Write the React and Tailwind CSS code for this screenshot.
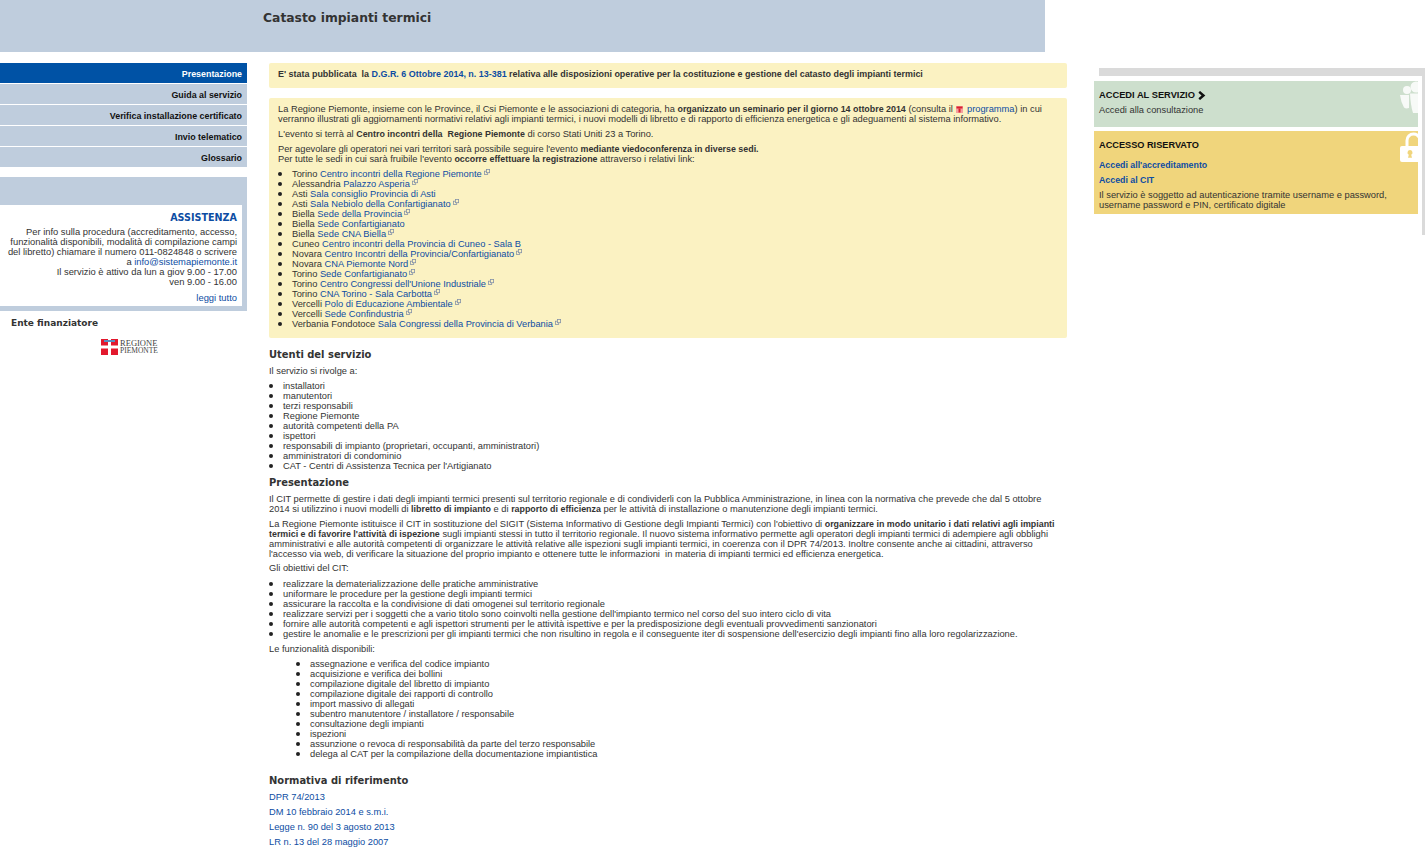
const Ext = () => (
  <svg width="6" height="6" viewBox="0 0 6 6" className="inline-block ml-[2px] align-[2px]" fill="none" stroke="#8593a8" strokeWidth="0.8">
    <rect x="0.5" y="2.2" width="3.2" height="3.2" />
    <rect x="2.4" y="0.5" width="3.2" height="3.2" fill="#fbf2c2" />
  </svg>
);
const A = ({ children, ext }) => (
  <>
    <a className="text-[#0d4da3]">{children}</a>
    {ext && <Ext />}
  </>
);
const B = ({ children }) => <b className="text-[8.9px]">{children}</b>;
const seats = [
  ["Torino", "Centro incontri della Regione Piemonte", true],
  ["Alessandria", "Palazzo Asperia", true],
  ["Asti", "Sala consiglio Provincia di Asti", false],
  ["Asti", "Sala Nebiolo della Confartigianato", true],
  ["Biella", "Sede della Provincia", true],
  ["Biella", "Sede Confartigianato", false],
  ["Biella", "Sede CNA Biella", true],
  ["Cuneo", "Centro incontri della Provincia di Cuneo - Sala B", false],
  ["Novara", "Centro Incontri della Provincia/Confartigianato", true],
  ["Novara", "CNA Piemonte Nord", true],
  ["Torino", "Sede Confartigianato", true],
  ["Torino", "Centro Congressi dell'Unione Industriale", true],
  ["Torino", "CNA Torino - Sala Carbotta", true],
  ["Vercelli", "Polo di Educazione Ambientale", true],
  ["Vercelli", "Sede Confindustria", true],
  ["Verbania Fondotoce", "Sala Congressi della Provincia di Verbania", true],
];
const users = [
  "installatori", "manutentori", "terzi responsabili", "Regione Piemonte", "autorità competenti della PA", "ispettori",
  "responsabili di impianto (proprietari, occupanti, amministratori)", "amministratori di condominio", "CAT - Centri di Assistenza Tecnica per l'Artigianato",
];
const goals = [
  "realizzare la dematerializzazione delle pratiche amministrative",
  "uniformare le procedure per la gestione degli impianti termici",
  "assicurare la raccolta e la condivisione di dati omogenei sul territorio regionale",
  "realizzare servizi per i soggetti che a vario titolo sono coinvolti nella gestione dell'impianto termico nel corso del suo intero ciclo di vita",
  "fornire alle autorità competenti e agli ispettori strumenti per le attività ispettive e per la predisposizione degli eventuali provvedimenti sanzionatori",
  "gestire le anomalie e le prescrizioni per gli impianti termici che non risultino in regola e il conseguente iter di sospensione dell'esercizio degli impianti fino alla loro regolarizzazione.",
];
const funcs = [
  "assegnazione e verifica del codice impianto", "acquisizione e verifica dei bollini", "compilazione digitale del libretto di impianto",
  "compilazione digitale dei rapporti di controllo", "import massivo di allegati", "subentro manutentore / installatore / responsabile",
  "consultazione degli impianti", "ispezioni", "assunzione o revoca di responsabilità da parte del terzo responsabile",
  "delega al CAT per la compilazione della documentazione impiantistica",
];
const H = ({ children, cls = "" }) => (
  <h2 className={"font-['DejaVu_Sans',sans-serif] font-bold text-[9.95px] leading-[14px] text-[#333] " + cls}>{children}</h2>
);
const Menu = ({ children, active }) => (
  <div className={"h-[20px] leading-[22px] text-right pr-[5px] font-bold text-[8.9px] mb-[1px] " + (active ? "bg-[#0052a5] text-white" : "bg-[#bfcddd] text-[#111]")}>{children}</div>
);
const Ul = ({ items, cls = "" }) => (
  <ul className={"list-disc marker:text-[12px] marker:text-[#222] pl-[14px] " + cls}>
    {items.map((t) => <li key={t} className="h-[10px]">{t}</li>)}
  </ul>
);
export default function App() {
  return (
    <div className="w-[1427px] h-[847px] overflow-hidden bg-white font-['Liberation_Sans',sans-serif] text-[9.3px] leading-[10px] text-[#333]">
      <header className="w-[1045px] h-[52px] bg-[#bfcddd] pl-[263px] pt-[10px]">
        <h1 className="font-['DejaVu_Sans',sans-serif] font-bold text-[12.35px] leading-[16px] text-[#333]">Catasto impianti termici</h1>
      </header>
      <div className="flex pt-[11px]">
        <aside className="w-[247px] shrink-0">
          <Menu active>Presentazione</Menu>
          <Menu>Guida al servizio</Menu>
          <Menu>Verifica installazione certificato</Menu>
          <Menu>Invio telematico</Menu>
          <Menu>Glossario</Menu>
          <div className="mt-[10px] bg-[#bfcddd] pt-[28px] pr-[5px] pb-[5px]">
            <div className="bg-white text-right text-[9.4px] pr-[5px] pt-[7px] pb-[3px]">
              <div className="font-['DejaVu_Sans',sans-serif] font-bold text-[9.6px] leading-[12px] text-[#0d4da3] mb-[3px]">ASSISTENZA</div>
              <p>Per info sulla procedura (accreditamento, accesso,<br />funzionalità disponibili, modalità di compilazione campi<br />del libretto) chiamare il numero 011-0824848 o scrivere<br />a <span className="text-[#0d4da3]">info@sistemapiemonte.it</span><br />Il servizio è attivo da lun a giov 9.00 - 17.00<br />ven 9.00 - 16.00</p>
              <p className="mt-[6px] text-[#0d4da3]">leggi tutto</p>
            </div>
          </div>
          <H cls="pl-[11px] mt-[5px] !text-[9px]">Ente finanziatore</H>
          <div className="flex items-center justify-center gap-[2px] mt-[9px] pl-[12px]">
            <svg width="17" height="16" viewBox="0 0 17 16">
              <rect width="17" height="16" fill="#e2182d" />
              <rect x="0" y="6.500" width="17" height="3" fill="#fff" />
              <rect x="7" y="0" width="3" height="16" fill="#fff" />
              <rect x="3" y="1" width="11" height="2" fill="#5a8fc0" />
            </svg>
            <div className="font-['Liberation_Serif',serif] text-[8.5px] leading-[7.5px] text-[#444]">REGIONE<br /><span className="text-[7.5px]">PIEMONTE</span></div>
          </div>
        </aside>
        <main className="ml-[22px] w-[798px] shrink-0">
          <div className="bg-[#fbf2c2] rounded-[2px] h-[25px] leading-[22px] pl-[9px] font-bold text-[8.95px]">
            E' stata pubblicata&nbsp; la <A>D.G.R. 6 Ottobre 2014, n. 13-381</A> relativa alle disposizioni operative per la costituzione e gestione del catasto degli impianti termici
          </div>
          <div className="mt-[10px] bg-[#fbf2c2] rounded-[2px] pl-[9px] pr-[9px] pt-[6px] pb-[5px] h-[240px]">
            <p>La Regione Piemonte, insieme con le Province, il Csi Piemonte e le associazioni di categoria, ha <B>organizzato un seminario per il giorno 14 ottobre 2014</B> (consulta il <svg width="7" height="7" viewBox="0 0 7 7" className="inline-block mx-[1px]"><rect width="7" height="7" fill="#f4a0a0" /><rect x="0.5" y="0.5" width="6" height="2" fill="#d8202c" /><rect x="2.5" y="2.5" width="2" height="4" fill="#d8202c" /></svg> <a className="text-[#0d4da3]">programma</a>) in cui verranno illustrati gli aggiornamenti normativi relativi agli impianti termici, i nuovi modelli di libretto e di rapporto di efficienza energetica e gli adeguamenti al sistema informativo.</p>
            <p className="mt-[5px]">L'evento si terrà al <B>Centro incontri della&nbsp; Regione Piemonte</B> di corso Stati Uniti 23 a Torino.</p>
            <p className="mt-[5px]">Per agevolare gli operatori nei vari territori sarà possibile seguire l'evento <B>mediante viedoconferenza in diverse sedi.</B><br />Per tutte le sedi in cui sarà fruibile l'evento <B>occorre effettuare la registrazione</B> attraverso i relativi link:</p>
            <ul className="list-disc marker:text-[12px] marker:text-[#222] pl-[14px] mt-[4px]">
              {seats.map(([c, t, e]) => (
                <li key={c + t} className="h-[10px]">{c} <A ext={e}>{t}</A></li>
              ))}
            </ul>
          </div>
          <H cls="mt-[10px]">Utenti del servizio</H>
          <p className="mt-[4px]">Il servizio si rivolge a:</p>
          <Ul items={users} cls="mt-[4px]" />
          <H cls="mt-[6px]">Presentazione</H>
          <p className="mt-[4px]">Il CIT permette di gestire i dati degli impianti termici presenti sul territorio regionale e di condividerli con la Pubblica Amministrazione, in linea con la normativa che prevede che dal 5 ottobre<br />2014 si utilizzino i nuovi modelli di <B>libretto di impianto</B> e di <B>rapporto di efficienza</B> per le attività di installazione o manutenzione degli impianti termici.</p>
          <p className="mt-[5px]">La Regione Piemonte istituisce il CIT in sostituzione del SIGIT (Sistema Informativo di Gestione degli Impianti Termici) con l'obiettivo di <B>organizzare in modo unitario i dati relativi agli impianti termici e di favorire l'attività di ispezione</B> sugli impianti stessi in tutto il territorio regionale. Il nuovo sistema informativo permette agli operatori degli impianti termici di adempiere agli obblighi amministrativi e alle autorità competenti di organizzare le attività relative alle ispezioni sugli impianti termici, in coerenza con il DPR 74/2013. Inoltre consente anche ai cittadini, attraverso l'accesso via web, di verificare la situazione del proprio impianto e ottenere tutte le informazioni&nbsp; in materia di impianti termici ed efficienza energetica.</p>
          <p className="mt-[4px]">Gli obiettivi del CIT:</p>
          <Ul items={goals} cls="mt-[5px]" />
          <p className="mt-[6px]">Le funzionalità disponibili:</p>
          <Ul items={funcs} cls="mt-[4px] !pl-[41px]" />
          <H cls="mt-[16px]">Normativa di riferimento</H>
          <div className="text-[#0d4da3] mt-[2px]">
            <p className="h-[15px] leading-[15px]">DPR 74/2013</p>
            <p className="h-[15px] leading-[15px]">DM 10 febbraio 2014 e s.m.i.</p>
            <p className="h-[15px] leading-[15px]">Legge n. 90 del 3 agosto 2013</p>
            <p className="h-[15px] leading-[15px]">LR n. 13 del 28 maggio 2007</p>
          </div>
        </main>
        <aside className="ml-[27px] w-[331px] shrink-0 pt-[5px]">
          <div className="ml-[5px] h-[167px] border-t-[8px] border-r-[3px] border-[#dadada] pt-[5px]">
            <div className="relative -ml-[5px] w-[324px] h-[46px] bg-[#cddfcd] pl-[5px] pt-[9px] overflow-hidden">
              <div className="flex items-center gap-[3px] font-bold text-[9.3px] text-[#111]">ACCEDI AL SERVIZIO
                <svg width="8" height="9" viewBox="0 0 8 9"><path d="M1.200 .8 L5.500 4.500 L1.200 8.200" fill="none" stroke="#111" strokeWidth="2.400" /></svg>
              </div>
              <p className="mt-[5px]">Accedi alla consultazione</p>
              <svg width="18" height="32" viewBox="0 0 18 32" className="absolute right-0 top-0" fill="#fff" opacity="0.85">
                <circle cx="16" cy="6" r="5.500" />
                <circle cx="7" cy="9" r="4" />
                <path d="M0 14 h9 v13 q-3 1 -5 -.5 q-3 -5 -4 -12.500 z" />
                <path d="M10 12.500 h8 v19.500 h-5 q-2.500 -8 -3 -19.500 z" />
              </svg>
            </div>
            <div className="relative -ml-[5px] w-[324px] h-[83px] mt-[4px] bg-[#f0d57c] pl-[5px] pt-[9px] overflow-hidden">
              <div className="font-bold text-[9.2px] text-[#111]">ACCESSO RISERVATO</div>
              <p className="mt-[10px] font-bold text-[8.8px] text-[#0d4da3]">Accedi all'accreditamento</p>
              <p className="mt-[5px] font-bold text-[8.8px] text-[#0d4da3]">Accedi al CIT</p>
              <p className="mt-[5px]">Il servizio è soggetto ad autenticazione tramite username e password,<br />username password e PIN, certificato digitale</p>
              <svg width="18" height="32" viewBox="0 0 18 32" className="absolute right-0 top-0" fill="#fff">
                <path d="M7 15 V9.500 a6.500 6.500 0 0 1 13 0 V15" fill="none" stroke="#fff" strokeWidth="3" />
                <path fillRule="evenodd" d="M2 15 h16 v16 h-16 a2 2 0 0 1 -2 -2 v-12 a2 2 0 0 1 2 -2 z M10 19 a2.500 2.500 0 0 0 -1.200 4.700 l-.8 3 h4 l-.8 -3 a2.500 2.500 0 0 0 -1.200 -4.700 z" />
              </svg>
            </div>
          </div>
        </aside>
      </div>
    </div>
  );
}
